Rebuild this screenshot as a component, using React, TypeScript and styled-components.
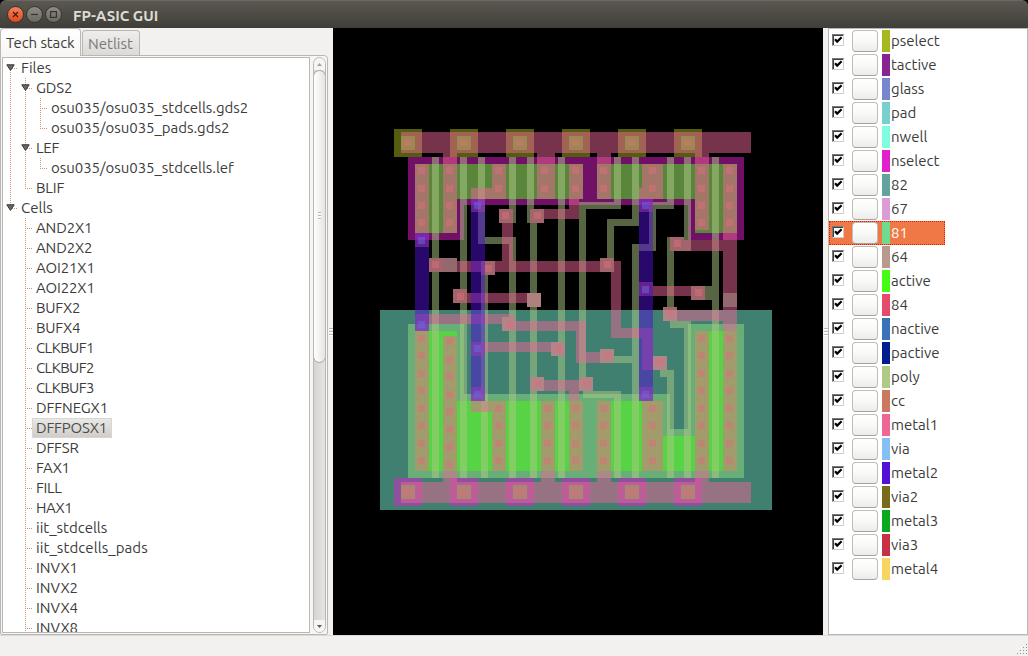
import React from "react";
import styled, { createGlobalStyle } from "styled-components";

const GlobalStyle = createGlobalStyle`
  * { box-sizing: border-box; }
  html, body { margin: 0; padding: 0; }
  body {
    width: 1028px;
    height: 656px;
    overflow: hidden;
    background: #f2f1f0;
    color: #3c3c3c;
    font-family: Ubuntu, "Noto Sans", sans-serif;
    font-size: 15px;
  }
`;

const Window = styled.div`
  display: flex;
  flex-direction: column;
  width: 1028px;
  height: 656px;
  background: #000;
`;

const TitleBar = styled.header`
  flex: none;
  display: flex;
  align-items: center;
  height: 28px;
  padding-left: 7px;
  border-radius: 6px 6px 0 0;
  border-top: 1px solid #6a6860;
  background: linear-gradient(#5a5850, #3f3e39);
`;

const WindowButton = styled.span<{ $close?: boolean }>`
  display: flex;
  align-items: center;
  justify-content: center;
  width: 17px;
  height: 17px;
  margin-right: 2px;
  border-radius: 50%;
  border: 1px solid #35342f;
  background: ${(p) =>
    p.$close ? "linear-gradient(#f5835c, #dd4a1c)" : "linear-gradient(#8d8b83, #6a6861)"};
`;

const Title = styled.h1`
  margin: 1px 0 0 9px;
  font-size: 15px;
  font-weight: 700;
  color: #dfdbd2;
`;

const Main = styled.main`
  flex: none;
  display: flex;
  height: 607px;
  background: #f2f1f0;
`;

const StatusBar = styled.footer`
  flex: 1;
  display: flex;
  align-items: flex-end;
  justify-content: flex-end;
  border-top: 1px solid #dcdad8;
  background: #f2f1f0;
`;

const LeftPanel = styled.section`
  display: flex;
  flex-direction: column;
  width: 328px;
`;

const TabBar = styled.div`
  flex: none;
  display: flex;
  align-items: flex-end;
  gap: 1px;
  height: 27px;
`;

const Tab = styled.div<{ $active?: boolean }>`
  position: relative;
  z-index: ${(p) => (p.$active ? 1 : 0)};
  width: ${(p) => (p.$active ? 81 : 58)}px;
  height: ${(p) => (p.$active ? 28 : 25)}px;
  margin-bottom: ${(p) => (p.$active ? -1 : 0)}px;
  padding-left: 5px;
  line-height: ${(p) => (p.$active ? 28 : 26)}px;
  border: 1px solid #bab7b3;
  border-bottom: 0;
  border-radius: 4px 4px 0 0;
  background: ${(p) => (p.$active ? "linear-gradient(#ffffff, #f7f6f5)" : "linear-gradient(#efeeed, #dcdad8)")};
  color: ${(p) => (p.$active ? "#3c3c3c" : "#7b7977")};
  white-space: nowrap;
  letter-spacing: ${(p) => (p.$active ? "-0.1px" : "0")};
`;

const Pane = styled.div`
  flex: 1;
  display: flex;
  gap: 3px;
  min-height: 0;
  padding: 1px;
  border: 1px solid #bab7b3;
  border-radius: 0 4px 2px 2px;
  background: #f7f6f5;
`;

const Tree = styled.div`
  width: 308px;
  height: 576px;
  overflow: hidden;
  border: 1px solid #bab7b3;
  background: #fff;
`;

const TreeRow = styled.div`
  display: flex;
  height: 20px;
`;

const dotsV = "repeating-linear-gradient(to bottom, #d4916f 0 1px, transparent 1px 2px)";
const dotsH = "repeating-linear-gradient(to right, #d4916f 0 1px, transparent 1px 2px)";

type GuideKind = "none" | "line" | "tee" | "end" | "root";

const guideStyle: Record<GuideKind, string> = {
  none: "",
  line: `background: ${dotsV} 7px 0 / 1px 20px no-repeat;`,
  tee: `background: ${dotsV} 7px 0 / 1px 20px no-repeat, ${dotsH} 9px 10px / 6px 1px no-repeat;`,
  end: `background: ${dotsV} 7px 0 / 1px 11px no-repeat, ${dotsH} 9px 10px / 6px 1px no-repeat;`,
  root: `background: ${dotsV} 7px 10px / 1px 10px no-repeat, ${dotsH} 9px 10px / 6px 1px no-repeat;`,
};

const Guide = styled.span<{ $kind: GuideKind }>`
  flex: none;
  width: 15px;
  height: 20px;
  padding: 6px 0 0 3px;
  line-height: 0;
  ${(p) => guideStyle[p.$kind]}
`;

const TreeLabel = styled.span<{ $selected?: boolean; $spacing: number }>`
  height: 20px;
  padding: 0 4px 0 3px;
  line-height: 20px;
  letter-spacing: ${(p) => p.$spacing}px;
  white-space: nowrap;
  ${(p) =>
    p.$selected &&
    "background: linear-gradient(#e9e8e7, #d0cdc9); border: 1px solid #d8d6d3; margin-left: -1px; line-height: 18px; color: #4c4c4c;"}
`;

const ScrollBar = styled.div`
  display: flex;
  flex-direction: column;
  align-items: center;
  width: 13px;
  height: 576px;
  border: 1px solid #bab7b3;
  border-radius: 7px;
  background: linear-gradient(to right, #d6d4d2, #e6e4e3);
  overflow: hidden;
`;

const ScrollStep = styled.span`
  flex: none;
  display: flex;
  align-items: center;
  justify-content: center;
  width: 11px;
  height: 12px;
  background: #f6f5f4;
`;

const ScrollThumb = styled.div`
  flex: none;
  display: flex;
  align-items: center;
  justify-content: center;
  width: 13px;
  height: 293px;
  padding-bottom: 2px;
  border: 1px solid #aaa7a3;
  border-radius: 7px;
  background: linear-gradient(to right, #ffffff, #e6e4e2);
`;

const ScrollTrack = styled.div`
  flex: 1;
`;

const Splitter = styled.div`
  flex: none;
  display: flex;
  align-items: center;
  justify-content: center;
  width: 5px;
`;

const Grip = styled.span<{ $w: number }>`
  width: ${(p) => p.$w}px;
  height: 8px;
  background: repeating-linear-gradient(#bcbab7 0 1px, #fff 1px 2px, transparent 2px 3px);
`;

const Canvas = styled.section`
  width: 490px;
  background: #000;
`;

const LayerList = styled.aside`
  width: 200px;
  height: 607px;
  border: 1px solid #bab7b3;
  background: #fff;
`;

const LayerRow = styled.div<{ $selected?: boolean }>`
  display: flex;
  align-items: center;
  width: 116px;
  height: 24px;
  padding-left: 3px;
  ${(p) => p.$selected && "background: #f07746; color: #fff; outline: 1px dotted #e61c00; outline-offset: -1px;"}
`;

const CheckBox = styled.span`
  flex: none;
  display: flex;
  width: 12px;
  height: 12px;
  margin: -2px 8px 0 0;
  border: 1px solid;
  border-color: #7a7876 #d4d0c8 #d4d0c8 #7a7876;
  box-shadow: inset 1px 1px 0 #404040;
  background: #fff;
`;

const PushButton = styled.span`
  flex: none;
  width: 26px;
  height: 22px;
  margin-right: 4px;
  border: 1px solid #c0bdba;
  border-bottom-color: #a5a29f;
  border-radius: 4px;
  background: linear-gradient(#ffffff, #f8f8f7 55%, #ececea);
`;

const Swatch = styled.span<{ $color: string }>`
  flex: none;
  width: 8px;
  height: 22px;
  background: ${(p) => p.$color};
`;

const LayerName = styled.span`
  padding-left: 1px;
  line-height: 22px;
`;

type Node = { guides: GuideKind[]; text: string; open?: boolean; selected?: boolean; spacing?: number };

const cells: [string, number?][] = [
  ["AND2X1", -0.13], ["AND2X2", -0.13], ["AOI21X1", -0.13], ["AOI22X1", -0.13],
  ["BUFX2", -0.2], ["BUFX4", -0.2],
  ["CLKBUF1", -0.6], ["CLKBUF2", -0.6], ["CLKBUF3", -0.6],
  ["DFFNEGX1", -0.1], ["DFFPOSX1", -0.2], ["DFFSR", -0.2],
  ["FAX1", -0.4], ["FILL", -0.4], ["HAX1", -0.5],
  ["iit_stdcells"], ["iit_stdcells_pads", 0.08],
  ["INVX1"], ["INVX2"], ["INVX4"], ["INVX8"],
];

const tree: Node[] = [
  { guides: ["root"], text: "Files", open: true },
  { guides: ["line", "tee"], text: "GDS2", open: true, spacing: -0.15 },
  { guides: ["line", "line", "tee"], text: "osu035/osu035_stdcells.gds2", spacing: -0.03 },
  { guides: ["line", "line", "end"], text: "osu035/osu035_pads.gds2", spacing: -0.03 },
  { guides: ["line", "tee"], text: "LEF", open: true, spacing: -0.3 },
  { guides: ["line", "line", "end"], text: "osu035/osu035_stdcells.lef", spacing: -0.03 },
  { guides: ["line", "end"], text: "BLIF", spacing: -0.2 },
  { guides: ["end"], text: "Cells", open: true },
  ...cells.map(([text, spacing]): Node => ({
    guides: ["none", "tee"],
    text,
    spacing,
    selected: text === "DFFPOSX1",
  })),
];

const layers: [string, string][] = [
  ["pselect", "#a5b81e"], ["tactive", "#882393"], ["glass", "#7887cd"], ["pad", "#78cfcc"],
  ["nwell", "#7dffdf"], ["nselect", "#df21cb"], ["82", "#62a39d"], ["67", "#db9bd8"],
  ["81", "#6edb8f"], ["64", "#b8998e"], ["active", "#46fb14"], ["84", "#e64b6e"],
  ["nactive", "#3a73ba"], ["pactive", "#001e90"], ["poly", "#aeca86"], ["cc", "#cb7860"],
  ["metal1", "#ee6696"], ["via", "#84c0f2"], ["metal2", "#5210d8"], ["via2", "#7a6a1b"],
  ["metal3", "#0aa81c"], ["via3", "#c83046"], ["metal4", "#f7d660"],
];

/* A shape is [left, top, right, bottom] in window coordinates. */
type Box = [number, number, number, number];

const railX = [0, 1, 2, 3, 4, 5].map((i) => 401 + 56 * i);
const squares = (size: number, pts: [number, number][]): Box[] =>
  pts.map(([x, y]) => [x, y, x + size, y + size]);
const column = (x: number, ys: number[]): [number, number][] => ys.map((y) => [x, y]);

const topShort = [167, 185];
const topLong = [167, 185, 202, 219];
const lowShort = [405, 422, 440, 457];
const lowLong = [335, 352, 370, 387, 405, 422, 440, 457];

const pads: [number, number][] = [
  [499, 209], [530, 209], [429, 258], [481, 261], [600, 258], [453, 289], [691, 286],
  [670, 237], [663, 307], [502, 317], [551, 342], [600, 349], [653, 356], [530, 377], [579, 377],
];
const padContacts: [number, number][] = [
  [502, 212], [534, 212], [432, 261], [485, 265], [604, 261], [457, 293], [695, 289],
  [674, 240], [667, 310], [506, 321], [555, 345], [604, 352], [656, 359], [534, 380], [583, 380],
];

const shapes: Record<string, Box[]> = {
  pselect: [
    ...railX.map((x): Box => [x - 7, 129, x + 21, 157]),
    [408, 324, 464, 478], [464, 394, 670, 478], [670, 429, 688, 478], [688, 324, 744, 478],
  ],
  nwell: [[380, 310, 772, 510]],
  nselect: [
    ...railX.map((x): Box => [x - 7, 478, x + 21, 506]),
    [408, 157, 744, 205], [408, 205, 464, 240], [688, 205, 744, 240],
  ],
  "81": squares(14, [[443, 258], [723, 293], [527, 293]]),
  active: [
    ...squares(14, railX.map((x): [number, number] => [x, 136])),
    ...squares(14, railX.map((x): [number, number] => [x, 485])),
    [415, 164, 457, 233], [457, 164, 583, 199], [597, 164, 695, 199], [695, 164, 737, 233],
    [415, 331, 457, 471], [457, 401, 583, 471], [597, 401, 663, 471], [663, 436, 695, 471],
    [695, 331, 737, 471],
  ],
  poly: [
    ...squares(14, pads), [527, 293, 541, 307],
    [432, 157, 439, 478], [460, 157, 467, 478],
    [478, 157, 485, 244], [485, 237, 516, 244], [481, 261, 488, 478],
    [509, 157, 516, 223], [509, 244, 516, 478],
    [527, 157, 534, 223], [530, 223, 537, 478], [558, 157, 565, 478],
    [614, 157, 621, 209], [579, 202, 614, 209], [579, 209, 586, 391],
    [583, 391, 621, 398], [614, 398, 621, 478],
    [632, 157, 639, 226], [607, 219, 632, 226], [607, 226, 614, 272],
    [667, 157, 674, 209], [649, 202, 667, 209], [649, 209, 656, 251],
    [632, 244, 649, 251], [632, 251, 639, 478], [614, 356, 632, 363],
    [684, 157, 691, 240], [667, 237, 691, 251], [667, 251, 674, 321],
    [670, 321, 691, 328], [684, 328, 691, 478],
    [712, 157, 719, 478], [705, 286, 719, 300],
    [660, 370, 674, 377], [667, 377, 674, 478],
  ],
  cc: squares(7, [
    ...railX.map((x): [number, number] => [x + 3, 139]),
    ...railX.map((x): [number, number] => [x + 3, 489]),
    ...column(418, topLong), ...column(446, topLong), ...column(495, topShort),
    ...column(541, topShort), ...column(572, topShort), ...column(600, topShort),
    ...column(649, topShort), ...column(698, topLong), ...column(726, topLong),
    ...column(418, lowLong), ...column(446, [338, 356, 373, 391, 408, 426, 443, 461]),
    ...column(495, lowShort), ...column(544, lowShort), ...column(572, lowShort),
    ...column(600, lowShort), ...column(649, lowShort), ...column(698, lowLong),
    ...column(726, lowLong), ...padContacts,
  ]),
  metal1: [
    ...squares(14, pads), ...squares(14, [[443, 258], [527, 293]]),
    [401, 132, 751, 153], [401, 482, 751, 503],
    [415, 164, 429, 247], [443, 153, 457, 233], [492, 164, 506, 199], [471, 188, 506, 199],
    [471, 199, 485, 212], [537, 153, 555, 199], [569, 164, 583, 199], [569, 199, 579, 219],
    [544, 209, 579, 219], [597, 153, 611, 199], [642, 164, 663, 199], [639, 188, 653, 212],
    [695, 153, 709, 230], [723, 164, 737, 471], [684, 240, 737, 251],
    [502, 223, 513, 261], [457, 261, 614, 272], [611, 261, 621, 338], [611, 328, 653, 338],
    [642, 328, 653, 370], [467, 293, 527, 303], [653, 286, 691, 296], [639, 282, 653, 296],
    [677, 310, 737, 321], [415, 317, 429, 331], [415, 314, 513, 324],
    [516, 321, 586, 331], [576, 321, 586, 363], [586, 352, 600, 363],
    [471, 342, 485, 356], [485, 342, 551, 352], [544, 380, 579, 391], [569, 380, 579, 401],
    [415, 331, 429, 471], [443, 336, 457, 482], [471, 387, 485, 412], [485, 401, 506, 412],
    [492, 401, 506, 471], [541, 401, 555, 482], [569, 401, 583, 471], [597, 401, 611, 482],
    [639, 387, 653, 401], [642, 401, 663, 471], [695, 331, 709, 482],
  ],
  via: squares(7, [
    [418, 237], [418, 321], [474, 202], [642, 202], [474, 345], [642, 286], [474, 391], [642, 391],
  ]),
  metal2: [[415, 233, 429, 331], [471, 199, 485, 401], [639, 199, 653, 401]],
};

const Layout = () => (
  <svg width="490" height="607" viewBox="333 28 490 607" shapeRendering="crispEdges" display="block">
    {layers
      .filter(([name]) => shapes[name])
      .map(([name, color]) => (
        <g key={name} fill={color} opacity={0.5}>
          {shapes[name].map(([l, t, r, b], i) => (
            <rect key={i} x={l} y={t} width={r - l} height={b - t} />
          ))}
        </g>
      ))}
  </svg>
);

const Expander = () => (
  <svg width="9" height="7" viewBox="0 0 9 7">
    <path d="M0.8 0.8 H8.2 L4.5 6.4 Z" fill="#6b6b6b" stroke="#333" strokeWidth="1" />
  </svg>
);

const Check = () => (
  <svg width="10" height="10" viewBox="0 0 10 10">
    <path d="M2 4.2 L4.2 6.6 L8.6 2.2" fill="none" stroke="#000" strokeWidth="2.2" />
  </svg>
);

const Arrow = ({ down, color }: { down?: boolean; color: string }) => (
  <svg width="5" height="3" viewBox="0 0 5 3">
    <path d={down ? "M0 0 H5 L2.5 3 Z" : "M0 3 H5 L2.5 0 Z"} fill={color} />
  </svg>
);

const ResizeGrip = () => (
  <svg width="13" height="13" viewBox="0 0 13 13" shapeRendering="crispEdges">
    {[0, 1, 2, 3].map((row) =>
      Array.from({ length: row + 1 }, (_, i) => (
        <rect key={`${row}-${i}`} x={11 - 3 * i} y={1 + 3 * row} width="1" height="1" fill="#96938f" />
      )),
    )}
  </svg>
);

export default function App() {
  return (
    <>
      <GlobalStyle />
      <Window>
        <TitleBar>
          <WindowButton $close>
            <svg width="7" height="7" viewBox="0 0 7 7">
              <path d="M1 1 L6 6 M6 1 L1 6" stroke="#4a1c0c" strokeWidth="1.3" />
            </svg>
          </WindowButton>
          <WindowButton>
            <svg width="7" height="7" viewBox="0 0 7 7">
              <path d="M0 3.5 H7" stroke="#35342f" strokeWidth="1.2" />
            </svg>
          </WindowButton>
          <WindowButton>
            <svg width="7" height="7" viewBox="0 0 7 7">
              <rect x="0.6" y="0.6" width="5.8" height="5.8" fill="none" stroke="#35342f" strokeWidth="1.2" />
            </svg>
          </WindowButton>
          <Title>FP-ASIC GUI</Title>
        </TitleBar>
        <Main>
          <LeftPanel>
            <TabBar>
              <Tab $active>Tech stack</Tab>
              <Tab>Netlist</Tab>
            </TabBar>
            <Pane>
              <Tree>
                {tree.map((node) => (
                  <TreeRow key={node.text}>
                    {node.guides.map((kind, i) => (
                      <Guide key={i} $kind={kind}>
                        {node.open && i === node.guides.length - 1 && <Expander />}
                      </Guide>
                    ))}
                    <TreeLabel $selected={node.selected} $spacing={node.spacing ?? 0}>
                      {node.text}
                    </TreeLabel>
                  </TreeRow>
                ))}
              </Tree>
              <ScrollBar>
                <ScrollStep>
                  <Arrow color="#a3a09d" />
                </ScrollStep>
                <ScrollThumb>
                  <Grip $w={3} />
                </ScrollThumb>
                <ScrollTrack />
                <ScrollStep>
                  <Arrow down color="#5c5a57" />
                </ScrollStep>
              </ScrollBar>
            </Pane>
          </LeftPanel>
          <Splitter>
            <Grip $w={4} />
          </Splitter>
          <Canvas>
            <Layout />
          </Canvas>
          <Splitter>
            <Grip $w={4} />
          </Splitter>
          <LayerList>
            {layers.map(([name, color]) => (
              <LayerRow key={name} $selected={name === "81"}>
                <CheckBox>
                  <Check />
                </CheckBox>
                <PushButton />
                <Swatch $color={color} />
                <LayerName>{name}</LayerName>
              </LayerRow>
            ))}
          </LayerList>
        </Main>
        <StatusBar>
          <ResizeGrip />
        </StatusBar>
      </Window>
    </>
  );
}
